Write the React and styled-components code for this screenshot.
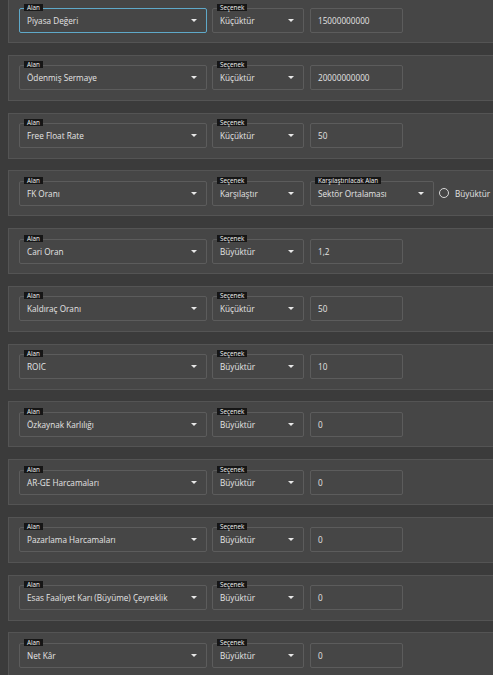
import React from "react";
import styled, { createGlobalStyle } from "styled-components";

const GlobalStyle = createGlobalStyle`
  html, body {
    margin: 0;
    background: #3b3b3b;
    font-family: "Open Sans", "Noto Sans", sans-serif;
  }
`;

const Page = styled.div`
  height: 675px;
  overflow: hidden;
  padding-left: 8px;
`;

const List = styled.div`
  display: flex;
  flex-direction: column;
  gap: 11.75px;
  margin-top: -3px;
`;

const Card = styled.div`
  align-items: center;
  background: #464646;
  border: 1px solid #545454;
  border-right: none;
  box-sizing: border-box;
  display: flex;
  height: 46px;
  padding: 0 0 0 10px;
`;

const Field = styled.div`
  align-items: center;
  border: 1px solid ${(p) => (p.$focused ? "#5fa9c9" : "#5c5c5c")};
  border-radius: 2px;
  box-sizing: border-box;
  display: flex;
  flex-shrink: 0;
  height: 25px;
  margin-right: ${(p) => p.$gap || 0}px;
  position: relative;
  width: ${(p) => p.$width}px;
`;

const Label = styled.span`
  background: #161616;
  color: #f2f2f2;
  font-size: 6.3px;
  left: 4px;
  line-height: 7px;
  padding: 0 3px;
  position: absolute;
  top: -5px;
  white-space: nowrap;
`;

const Value = styled.span`
  color: #e4e4e4;
  flex: 1;
  font-size: 8.2px;
  padding-left: 7px;
  white-space: nowrap;
`;

const Arrow = styled.span`
  border-left: 3px solid transparent;
  border-right: 3px solid transparent;
  border-top: 3px solid #e8e8e8;
  height: 0;
  margin-right: 9px;
  width: 0;
`;

const Radio = styled.label`
  align-items: center;
  color: #e4e4e4;
  display: flex;
  font-size: 8.2px;
  gap: 6px;
  margin-left: 5px;
`;

const Circle = styled.span`
  border: 1px solid #d8d8d8;
  border-radius: 50%;
  box-sizing: border-box;
  height: 10px;
  width: 10px;
`;

const rows = [
  { field: "Piyasa Değeri", op: "Küçüktür", value: "15000000000", focused: true },
  { field: "Ödenmiş Sermaye", op: "Küçüktür", value: "20000000000" },
  { field: "Free Float Rate", op: "Küçüktür", value: "50" },
  { field: "FK Oranı", op: "Karşılaştır", compare: "Sektör Ortalaması" },
  { field: "Cari Oran", op: "Büyüktür", value: "1,2" },
  { field: "Kaldıraç Oranı", op: "Küçüktür", value: "50" },
  { field: "ROIC", op: "Büyüktür", value: "10" },
  { field: "Özkaynak Karlılığı", op: "Büyüktür", value: "0" },
  { field: "AR-GE Harcamaları", op: "Büyüktür", value: "0" },
  { field: "Pazarlama Harcamaları", op: "Büyüktür", value: "0" },
  { field: "Esas Faaliyet Karı (Büyüme) Çeyreklik", op: "Büyüktür", value: "0" },
  { field: "Net Kâr", op: "Büyüktür", value: "0" },
];

const FilterRow = ({ row }) => (
  <Card>
    <Field $width={188} $gap={5} $focused={row.focused}>
      <Label>Alan</Label>
      <Value>{row.field}</Value>
      <Arrow />
    </Field>
    <Field $width={92} $gap={6}>
      <Label>Seçenek</Label>
      <Value>{row.op}</Value>
      <Arrow />
    </Field>
    {row.compare ? (
      <>
        <Field $width={124}>
          <Label>Karşılaştırılacak Alan</Label>
          <Value>{row.compare}</Value>
          <Arrow />
        </Field>
        <Radio>
          <Circle />
          Büyüktür
        </Radio>
      </>
    ) : (
      <Field $width={93}>
        <Value>{row.value}</Value>
      </Field>
    )}
  </Card>
);

const App = () => (
  <Page>
    <GlobalStyle />
    <List>
      {rows.map((row) => (
        <FilterRow key={row.field} row={row} />
      ))}
    </List>
  </Page>
);

export default App;
